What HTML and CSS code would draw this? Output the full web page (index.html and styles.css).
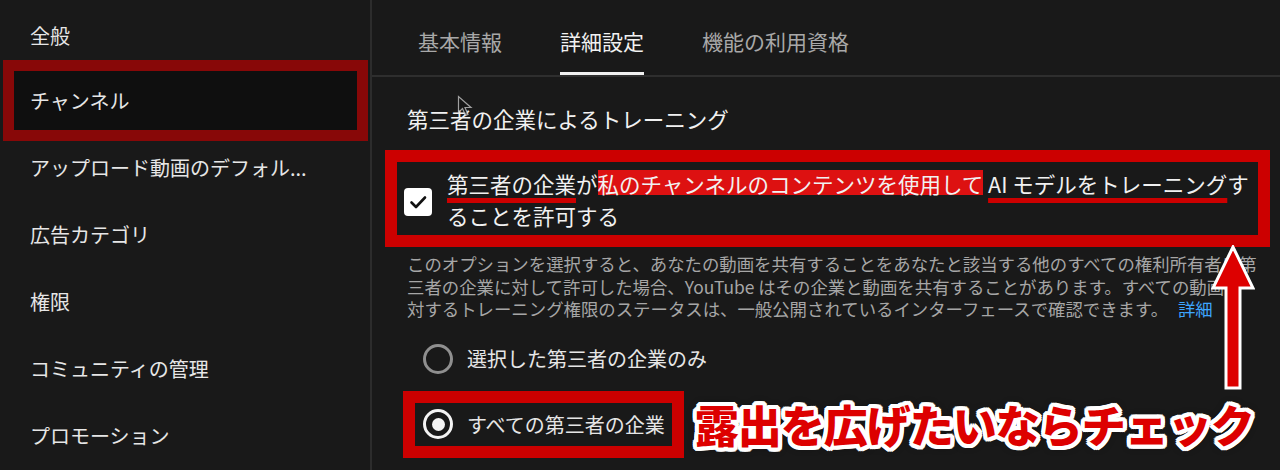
FILE: index.html
```html
<!DOCTYPE html>
<html lang="ja">
  <head>
    <meta charset="UTF-8" />
    <meta name="viewport" content="width=device-width, initial-scale=1.0" />
    <title>チャンネル設定 - 詳細設定</title>
    <link rel="stylesheet" href="styles.css">
  </head>
  <body>
    <div class="layout">
      <nav class="sidebar">
        <div class="nav-item">全般</div>
        <div class="nav-item marked">チャンネル</div>
        <div class="nav-item">アップロード動画のデフォル...</div>
        <div class="nav-item">広告カテゴリ</div>
        <div class="nav-item">権限</div>
        <div class="nav-item">コミュニティの管理</div>
        <div class="nav-item">プロモーション</div>
      </nav>

      <main class="main">
        <div class="tabs">
          <div class="tab">基本情報</div>
          <div class="tab active">詳細設定</div>
          <div class="tab">機能の利用資格</div>
        </div>

        <div class="section">
          <div class="section-title">第三者の企業によるトレーニング</div>

          <div class="consent-box">
            <div class="checkbox">
              <svg width="28" height="28" viewBox="0 0 28 28" fill="none" stroke="#111" stroke-width="2.6" stroke-linecap="round" stroke-linejoin="round">
                <path d="M7.5 14.5l4.5 4.5 9-9.5" />
              </svg>
            </div>
            <div class="consent-text">
              <span class="mark-line">第三者の企業</span>が<span class="mark-fill">私のチャンネルのコンテンツを使用して</span> <span class="mark-line">AI モデルをトレーニング</span>することを許可する
            </div>
          </div>

          <p class="description">
            このオプションを選択すると、あなたの動画を共有することをあなたと該当する他のすべての権利所有者に第三者の企業に対して許可した場合、YouTube はその企業と動画を共有することがあります。すべての動画に<span class="nobr">対する</span>トレーニング権限のステータスは、一般公開されているインターフェースで確認できます。
            <a class="link" href="#">詳細</a>
          </p>

          <div class="radio-row">
            <span class="radio"></span>
            選択した第三者の企業のみ
          </div>

          <div class="radio-line">
            <div class="radio-box">
              <span class="radio checked"></span>
              すべての第三者の企業
            </div>
            <div class="callout">露出を広げたいならチェック</div>
          </div>
        </div>
      </main>

      <svg class="arrow" width="44" height="146" viewBox="0 0 44 146">
        <path d="M22 2L2 43h13v100h14V43h13z" fill="#dd0000" stroke="#fff" stroke-width="3" stroke-linejoin="miter" />
      </svg>

      <svg class="cursor" width="20" height="22" viewBox="0 0 20 22">
        <path d="M1.5 1.5v16l4-4 3 7 2.5-1-3-7h6z" fill="rgba(20,20,20,0.6)" stroke="rgba(220,220,220,0.7)" stroke-width="1.2" />
      </svg>
    </div>
  </body>
</html>
```

FILE: styles.css
```css
* {
  margin: 0;
  padding: 0;
  box-sizing: border-box;
}

body {
  width: 1280px;
  height: 470px;
  overflow: hidden;
  background: #191919;
  font-family: "Noto Sans CJK JP", "Noto Sans", sans-serif;
  color: #ececec;
}

.layout {
  position: relative;
  display: flex;
  height: 470px;
}

/* sidebar */

.sidebar {
  width: 372px;
  flex-shrink: 0;
  border-right: 2px solid #2c2c2c;
}

.nav-item {
  height: 67px;
  display: flex;
  align-items: center;
  padding-left: 30px;
  font-size: 20px;
  color: #e6e6e6;
  white-space: nowrap;
}

.nav-item:first-child {
  height: 71px;
}

.nav-item.marked {
  height: 59px;
  margin: 0 13px 4px 14px;
  padding-left: 16px;
  background: #0f0f0f;
  outline: 11px solid #880808;
}

/* main */

.main {
  flex: 1;
}

.tabs {
  display: flex;
  padding-left: 17px;
  border-bottom: 2px solid #2e2e2e;
}

.tab {
  height: 75px;
  margin: 0 29px;
  padding-top: 9px;
  display: flex;
  align-items: center;
  font-size: 21px;
  color: #a8a8a8;
  border-bottom: 3px solid transparent;
}

.tab.active {
  color: #f1f1f1;
  border-bottom-color: #f1f1f1;
}

.section {
  padding: 27px 10px 0 13px;
}

.section-title {
  margin-left: 22px;
  margin-bottom: 17px;
  font-size: 21.5px;
  line-height: 29px;
  color: #f1f1f1;
}

.consent-box {
  display: flex;
  align-items: center;
  gap: 15px;
  height: 97px;
  padding: 5px 0 3px 7px;
  border: 12px solid #cc0000;
}

.checkbox {
  width: 28px;
  height: 28px;
  flex-shrink: 0;
  margin-top: 4px;
  background: #fff;
  border-radius: 4px;
  display: flex;
}

.consent-text {
  font-size: 21.5px;
  line-height: 32px;
  color: #f1f1f1;
}

.mark-line {
  text-decoration: underline;
  text-decoration-color: #cc0000;
  text-decoration-thickness: 5px;
  text-underline-offset: 5px;
}

.mark-fill {
  background: linear-gradient(
    to bottom,
    transparent 2px,
    #dd1111 2px,
    #dd1111 27px,
    transparent 27px
  );
}

.description {
  width: 856px;
  margin: 6px 0 0 22px;
  font-size: 17.4px;
  line-height: 22.5px;
  color: #a6a6a6;
}

.nobr {
  white-space: nowrap;
}

.link {
  margin-left: 6px;
  color: #3ea6ff;
  text-decoration: none;
}

.radio-row {
  display: flex;
  align-items: center;
  gap: 14px;
  height: 40px;
  margin: 18px 0 0 38px;
  font-size: 20px;
  color: #e6e6e6;
}

.radio {
  width: 30px;
  height: 30px;
  flex-shrink: 0;
  border: 3px solid #8f8f8f;
  border-radius: 50%;
  display: flex;
  align-items: center;
  justify-content: center;
}

.radio.checked {
  border-color: #f4f4f4;
}

.radio.checked::after {
  content: "";
  width: 13px;
  height: 13px;
  border-radius: 50%;
  background: #f4f4f4;
}

.radio-line {
  display: flex;
  align-items: center;
  margin: 12px 0 0 18px;
}

.radio-box {
  display: flex;
  align-items: center;
  gap: 14px;
  height: 67px;
  padding: 0 7px 0 8px;
  border: 12px solid #cc0000;
  font-size: 20px;
  color: #e6e6e6;
  white-space: nowrap;
}

.callout {
  margin-left: 11px;
  font-size: 44px;
  font-weight: 900;
  letter-spacing: -1px;
  line-height: 60px;
  color: #dd0000;
  white-space: nowrap;
  text-shadow: 4px 0 #fff, -4px 0 #fff, 0 4px #fff, 0 -4px #fff,
    3px 3px #fff, -3px -3px #fff, 3px -3px #fff, -3px 3px #fff,
    4px 2px #fff, -4px 2px #fff, 4px -2px #fff, -4px -2px #fff,
    2px 4px #fff, -2px 4px #fff, 2px -4px #fff, -2px -4px #fff,
    0 0 8px rgba(0, 0, 0, 0.8);
}

/* overlays */

.arrow {
  position: absolute;
  left: 1211px;
  top: 245px;
}

.cursor {
  position: absolute;
  left: 457px;
  top: 95px;
}
```
